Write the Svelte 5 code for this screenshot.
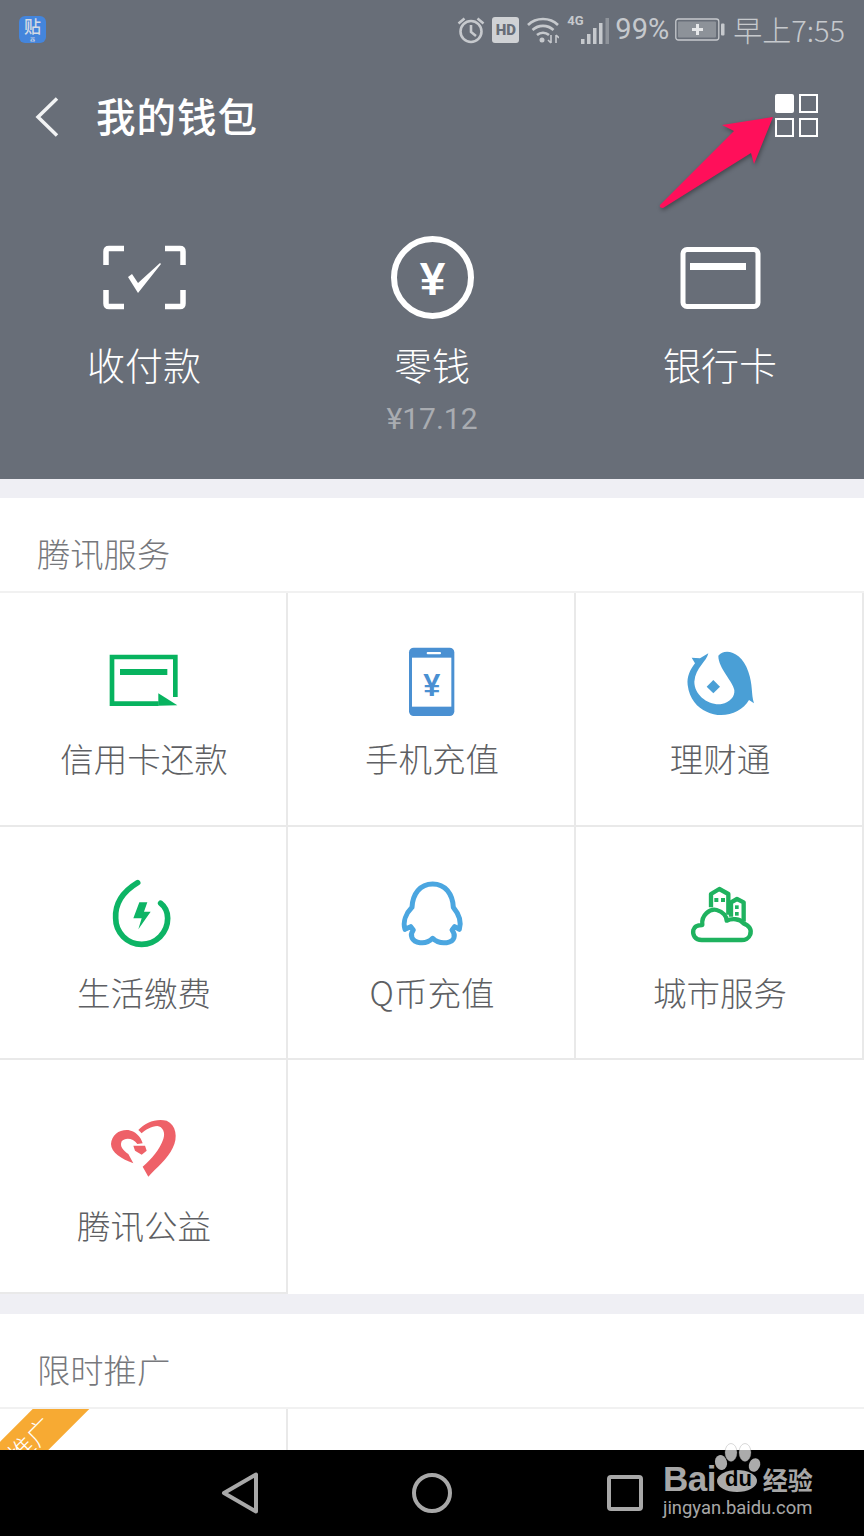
<script lang="ts">
	const actions = [
		{ icon: 'scan', label: '收付款', amount: '' },
		{ icon: 'coin', label: '零钱', amount: '¥17.12' },
		{ icon: 'card', label: '银行卡', amount: '' }
	];

	const services = [
		{ icon: 'credit', label: '信用卡还款' },
		{ icon: 'phone', label: '手机充值' },
		{ icon: 'licai', label: '理财通' },
		{ icon: 'bolt', label: '生活缴费' },
		{ icon: 'qq', label: 'Q币充值' },
		{ icon: 'city', label: '城市服务' },
		{ icon: 'heart', label: '腾讯公益' }
	];
</script>

{#snippet actionIcon(name: string)}
	{#if name === 'scan'}
		<svg class="action-icon" viewBox="0 0 83 83" width="83" height="83">
			<g fill="none" stroke="#fff" stroke-width="5.5">
				<path d="M21 12.5H6q-3 0-3 3V29" />
				<path d="M62 12.5h15q3 0 3 3V29" />
				<path d="M21 70.5H6q-3 0-3-3V54" />
				<path d="M62 70.5h15q3 0 3-3V54" />
			</g>
			<path d="M25 41l4-3 6 9 22-20 1 1-23 29z" fill="#fff" />
		</svg>
	{:else if name === 'coin'}
		<svg class="action-icon" viewBox="0 0 83 83" width="83" height="83">
			<circle cx="41.5" cy="41.5" r="38.5" fill="none" stroke="#fff" stroke-width="6" />
			<text x="41.5" y="59" text-anchor="middle" class="coin-yen">¥</text>
		</svg>
	{:else}
		<svg class="action-icon" viewBox="0 0 83 83" width="83" height="83">
			<rect x="4" y="13.5" width="75" height="57" rx="4" fill="none" stroke="#fff" stroke-width="5" />
			<rect x="11" y="27" width="56" height="7" fill="#fff" />
		</svg>
	{/if}
{/snippet}

{#snippet serviceIcon(name: string)}
	{#if name === 'credit'}
		<svg viewBox="27 9 270 270" width="90" height="90">
			<path d="M256 186V66H66v140h140" fill="none" stroke="#07b35f" stroke-width="14" />
			<rect x="90" y="102" width="142" height="18" fill="#07b35f" />
			<path d="M205 175l57 36-57 1z" fill="#07b35f" />
		</svg>
	{:else if name === 'phone'}
		<svg viewBox="6 9 270 270" width="90" height="90">
			<rect x="72" y="38" width="136" height="205" rx="14" fill="#4a90d2" />
			<rect x="81" y="68" width="118" height="147" fill="#fff" />
			<rect x="125" y="51" width="43" height="7" rx="3" fill="#fff" />
			<text x="140" y="184" text-anchor="middle" class="phone-yen">¥</text>
		</svg>
	{:else if name === 'licai'}
		<svg viewBox="0 9 270 270" width="90" height="90">
			<path
				d="M130 62C150 38 200 50 220 110c14 40 8 65 17 95l-15-10c-22 40-82 58-127 35-28-12-52-38-57-80-3-25 7-45 22-65L50 68l25 2 25-15c-5 25-38 42-42 85 0 40 42 72 82 67 25-5 40-22 38-42-3-25-48-65-48-103z"
				fill="#4a9fd6"
			/>
			<path d="M115 135l20 20-20 20-20-20z" fill="#4a9fd6" />
		</svg>
	{:else if name === 'bolt'}
		<svg viewBox="-3 6 270 270" width="90" height="90">
			<path
				d="M113 38C60 70 45 110 47 145a78 78 0 0 0 156 0c0-20-8-35-21-45"
				fill="none"
				stroke="#0db465"
				stroke-width="17"
				stroke-linecap="round"
			/>
			<path d="M118 97h24l-10 28h20l-37 53 10-33h-25z" fill="#0db465" />
		</svg>
	{:else if name === 'qq'}
		<svg viewBox="-9 6 270 270" width="90" height="90">
			<path
				d="M128 42c-38 0-60 30-62 70-18 18-28 43-21 66l17-8 8 10c-12 15-5 35 20 38 15 2 28-3 38-13 10 10 27 15 42 13 25-3 28-23 16-38l8-10 14 8c7-23-3-48-18-66-2-40-24-70-62-70z"
				fill="none"
				stroke="#4ba6e0"
				stroke-width="15"
				stroke-linejoin="round"
			/>
		</svg>
	{:else if name === 'city'}
		<svg viewBox="0 6 270 270" width="90" height="90">
			<g fill="none" stroke="#1fb25f" stroke-width="13" stroke-linejoin="round">
				<path d="M80 210c-20 0-28-15-25-30 3-12 15-15 27-15-4-30 23-50 43-45 20 5 30 20 30 32 15-7 40-7 50 8 17 5 27 20 20 35-3 10-15 15-25 15z" />
				<path d="M108 112V72l25-15 27 15v62" />
				<path d="M168 140V97l18-10 20 10v58" />
			</g>
			<g fill="#1fb25f">
				<rect x="118" y="84" width="12" height="12" />
				<rect x="138" y="84" width="12" height="12" />
				<rect x="180" y="106" width="11" height="11" />
				<rect x="180" y="126" width="11" height="11" />
			</g>
		</svg>
	{:else}
		<svg viewBox="-3 3 270 270" width="90" height="90">
			<g fill="#ee6168">
				<path d="M115 78c20-23 55-36 85-28 28 12 35 50 18 82-15 33-48 58-73 86l-17-30c27-23 52-53 62-83 7-20-2-37-18-39-17 0-37 12-47 22z" />
				<path d="M128 118c-6-22-23-36-43-40-27-2-50 14-52 42 0 25 32 45 67 58l-15-28c-15-10-27-22-20-38 10-12 35-10 47 8z" />
				<path d="M100 125h35l5 15-15 12-20-12z" />
			</g>
		</svg>
	{/if}
{/snippet}

<div class="page">
	<div class="main">
		<header class="wallet">
			<div class="statusbar">
				<div class="app-badge"><span class="app-badge-main">贴</span><span class="app-badge-sub">器</span></div>
				<div class="status-right">
					<svg viewBox="0 0 30 30" width="30" height="30">
						<g fill="none" stroke="#c6c9cd" stroke-width="2.6">
							<circle cx="15" cy="16.5" r="10.5" />
							<path d="M15 10v7l5 4" />
							<path d="M2.5 8.5l6-5M27.5 8.5l-6-5" />
						</g>
					</svg>
					<span class="hd">HD</span>
					<svg class="wifi" viewBox="0 0 32 28" width="32" height="28">
						<g fill="none" stroke="#c6c9cd" stroke-width="2.6">
							<path d="M1 9c8-8 22-8 30 0" />
							<path d="M5.5 14c6-5.5 15-5.5 21 0" />
							<path d="M10 19c3.500-3 8.500-3 12 0" />
						</g>
						<circle cx="15" cy="24" r="2.500" fill="#c6c9cd" />
						<path d="M24 19v8M29 19v8M21 24l3 3M32 22l-3-3" stroke="#c6c9cd" stroke-width="1.600" fill="none" />
					</svg>
					<div class="signal">
						<span class="net">4G</span>
						<svg viewBox="0 0 29 26" width="29" height="26">
							<g fill="#c6c9cd">
								<rect x="0" y="21" width="3.500" height="5" />
								<rect x="6" y="16" width="3.500" height="10" />
								<rect x="12" y="10" width="3.500" height="16" />
								<rect x="18" y="5" width="3.500" height="21" />
							</g>
							<rect x="24.500" y="0" width="3.500" height="26" fill="#8f949b" />
						</svg>
					</div>
					<span class="percent">99%</span>
					<svg class="battery" viewBox="0 0 50 24" width="50" height="24">
						<rect x="0.800" y="1" width="43" height="21" rx="2.500" fill="none" stroke="#c6c9cd" stroke-width="1.300" />
						<rect x="3" y="3.500" width="38" height="16" rx="1" fill="#8d9299" />
						<path d="M22.500 6v11M17 11.500h11" stroke="#e6e7e9" stroke-width="3" />
						<rect x="46" y="5.500" width="3.500" height="12" rx="1" fill="#c6c9cd" />
					</svg>
					<span class="clock">早上7:55</span>
				</div>
			</div>

			<div class="toolbar">
				<svg class="back" viewBox="0 0 24 40" width="24" height="40">
					<path d="M22 1.500L3 20l19 18.500" fill="none" stroke="#f2f3f4" stroke-width="3.500" />
				</svg>
				<h1>我的钱包</h1>
				<div class="apps">
					<span class="app-tile filled"></span>
					<span class="app-tile"></span>
					<span class="app-tile"></span>
					<span class="app-tile"></span>
				</div>
			</div>

			<div class="actions">
				{#each actions as action}
					<div class="action">
						{@render actionIcon(action.icon)}
						<span class="action-label">{action.label}</span>
						{#if action.amount}
							<span class="action-amount">{action.amount}</span>
						{/if}
					</div>
				{/each}
			</div>
		</header>

		<section class="group">
			<h2>腾讯服务</h2>
			<div class="grid">
				{#each services as service}
					<div class="cell">
						{@render serviceIcon(service.icon)}
						<span class="cell-label">{service.label}</span>
					</div>
				{/each}
			</div>
		</section>

		<section class="group">
			<h2>限时推广</h2>
			<div class="grid">
				<div class="cell promo">
					<span class="ribbon">推广</span>
				</div>
			</div>
		</section>
	</div>

	<nav class="navbar">
		<svg viewBox="0 0 38 44" width="38" height="44">
			<path d="M35 3.500v37L3 22z" fill="none" stroke="#a8a8a8" stroke-width="4" stroke-linejoin="round" />
		</svg>
		<svg viewBox="0 0 40 40" width="40" height="40">
			<circle cx="20" cy="20" r="18" fill="none" stroke="#a8a8a8" stroke-width="4" />
		</svg>
		<svg viewBox="0 0 38 38" width="38" height="38">
			<rect x="3" y="3" width="32" height="32" rx="2" fill="none" stroke="#a8a8a8" stroke-width="4" />
		</svg>
	</nav>

	<!-- annotation arrow drawn over the screenshot -->
	<svg class="arrow" viewBox="0 0 864 260" width="864" height="260">
		<path d="M773 117L722 125l12 6-74 74q-1 3 3 3l88-55 3 11z" fill="#ff0f5a" />
	</svg>

	<div class="watermark">
		<svg class="paw" viewBox="0 0 60 60" width="60" height="60">
			<g fill="rgba(255,255,255,0.67)">
				<ellipse cx="21" cy="9.500" rx="6" ry="9" stroke="rgba(130,130,130,0.3)" />
				<ellipse cx="35" cy="9.500" rx="6" ry="9" stroke="rgba(130,130,130,0.3)" />
				<ellipse cx="11" cy="19.500" rx="6" ry="7.500" transform="rotate(-15 11 19.500)" />
				<ellipse cx="44.500" cy="22" rx="5.500" ry="7" transform="rotate(25 44.500 22)" />
				<ellipse cx="27" cy="38" rx="20" ry="11" />
			</g>
		</svg>
		<div class="wm-top"><span class="wm-bai">Bai</span><span class="wm-du">du</span><span class="wm-cn">经验</span></div>
		<div class="wm-url">jingyan.baidu.com</div>
	</div>
</div>

<style>
	:global(body) {
		background: #000;
	}

	.page {
		position: relative;
		display: flex;
		flex-direction: column;
		width: 864px;
		height: 1536px;
		overflow: hidden;
		font-family: 'Noto Sans CJK SC', 'Noto Sans', sans-serif;
	}

	.main {
		flex: 1;
		min-height: 0;
		overflow: hidden;
		background: #efeff4;
	}

	.wallet {
		height: 479px;
		background: #686e78;
		color: #fff;
	}

	.statusbar {
		display: flex;
		align-items: center;
		justify-content: space-between;
		height: 60px;
		padding: 0 19px;
	}

	.app-badge {
		display: flex;
		flex-direction: column;
		align-items: center;
		width: 27px;
		height: 27px;
		margin-top: -2px;
		border-radius: 6px;
		background: #4485dc;
		color: #d5dbe4;
	}

	.app-badge-main {
		font-size: 17px;
		line-height: 20px;
		font-weight: 500;
	}

	.app-badge-sub {
		font-size: 5px;
		line-height: 6px;
	}

	.status-right {
		display: flex;
		align-items: center;
		color: #c6c9cd;
		font-family: Roboto, sans-serif;
	}

	.hd {
		width: 27px;
		height: 26px;
		margin-left: 6px;
		border-radius: 3px;
		background: #d0d2d5;
		color: #686e78;
		font-size: 15px;
		font-weight: 900;
		line-height: 26px;
		text-align: center;
	}

	.wifi {
		margin-left: 8px;
	}

	.signal {
		position: relative;
		display: flex;
		align-items: flex-end;
		height: 28px;
		margin-left: 8px;
		padding-left: 14px;
	}

	.net {
		position: absolute;
		left: 0;
		top: -2px;
		font-size: 13px;
		font-weight: 700;
		line-height: 14px;
	}

	.percent {
		margin-left: 5px;
		margin-top: -2px;
		font-size: 29px;
		line-height: 32px;
	}

	.battery {
		margin-left: 6px;
	}

	.clock {
		margin-left: 8px;
		margin-top: -2px;
		font-family: 'Noto Sans CJK SC', sans-serif;
		font-size: 29px;
		font-weight: 300;
		line-height: 32px;
	}

	.toolbar {
		display: flex;
		align-items: center;
		height: 114px;
		padding: 0 46px 0 35px;
	}

	.back {
		flex-shrink: 0;
	}

	h1 {
		flex: 1;
		margin: -4px 0 0 37px;
		font-size: 39.5px;
		font-weight: 500;
		letter-spacing: 1px;
		line-height: 50px;
	}

	.apps {
		display: grid;
		grid-template-columns: 19px 19px;
		grid-auto-rows: 19px;
		gap: 5px;
		margin-top: -4px;
	}

	.app-tile {
		border: 2.5px solid #fff;
		box-sizing: border-box;
	}

	.app-tile.filled {
		background: #fff;
		border-radius: 2px;
	}

	.actions {
		display: grid;
		grid-template-columns: repeat(3, 288px);
		padding-top: 62px;
	}

	.action {
		display: flex;
		flex-direction: column;
		align-items: center;
	}

	.action-icon {
		display: block;
	}

	.coin-yen {
		fill: #fff;
		font-family: 'Liberation Sans', sans-serif;
		font-size: 46px;
		font-weight: 700;
	}

	.action-label {
		margin-top: 17px;
		font-size: 38px;
		font-weight: 300;
		line-height: 56px;
	}

	.action-amount {
		margin-top: 7px;
		color: #a9acb1;
		font-family: Roboto, sans-serif;
		font-size: 30px;
		line-height: 40px;
	}

	.group {
		margin-top: 19px;
		background: #fff;
	}

	.group + .group {
		margin-top: 20.5px;
	}

	h2 {
		margin: 0;
		padding: 8px 0 0 37px;
		color: #77787c;
		font-size: 33.3px;
		font-weight: 300;
		line-height: 94px;
		height: 95px;
		border-bottom: 2px solid #f1f1f1;
		box-sizing: border-box;
	}

	.grid {
		display: grid;
		grid-template-columns: repeat(3, 288px);
		grid-auto-rows: 233.500px;
	}

	.cell {
		display: flex;
		flex-direction: column;
		align-items: center;
		box-sizing: border-box;
		padding: 45px 0 0 2px;
		border-right: 2px solid #e9e9e9;
		border-bottom: 2px solid #e9e9e9;
	}

	.cell svg {
		display: block;
		flex-shrink: 0;
	}

	.phone-yen {
		fill: #4a90d2;
		font-family: 'Liberation Sans', sans-serif;
		font-size: 92px;
		font-weight: 700;
	}

	.cell-label {
		margin-top: 7px;
		color: #5e5f63;
		font-size: 33.5px;
		font-weight: 300;
		line-height: 46px;
	}

	.promo {
		position: relative;
		overflow: hidden;
	}

	.ribbon {
		position: absolute;
		top: 11px;
		left: -70px;
		width: 200px;
		height: 40px;
		background: #f7aa33;
		color: #fff;
		font-size: 26px;
		font-weight: 300;
		line-height: 40px;
		text-align: center;
		transform: rotate(-45deg);
	}

	.navbar {
		display: flex;
		align-items: center;
		flex-shrink: 0;
		height: 86px;
		background: #000;
	}

	.navbar svg:nth-child(1) {
		margin-left: 221px;
	}

	.navbar svg:nth-child(2) {
		margin-left: 153px;
	}

	.navbar svg:nth-child(3) {
		margin-left: 154px;
	}

	.arrow {
		position: absolute;
		top: 0;
		left: 0;
		filter: drop-shadow(1px 2px 2px rgba(0, 0, 0, 0.35));
		pointer-events: none;
	}

	.watermark {
		position: absolute;
		left: 663px;
		top: 1463px;
		width: 170px;
		color: rgba(255, 255, 255, 0.67);
	}

	.paw {
		position: absolute;
		left: 47px;
		top: -20px;
	}

	.wm-top {
		position: relative;
		display: flex;
		align-items: center;
		height: 32px;
	}

	.wm-bai {
		font-family: 'Liberation Sans', sans-serif;
		font-size: 35px;
		font-weight: 700;
		line-height: 32px;
		letter-spacing: -0.500px;
	}

	.wm-du {
		margin-left: 9px;
		color: #000;
		font-family: 'Liberation Sans', sans-serif;
		font-size: 22px;
		font-weight: 700;
		line-height: 32px;
	}

	.wm-cn {
		margin-left: 11px;
		font-size: 25px;
		font-weight: 700;
		line-height: 32px;
	}

	.wm-url {
		font-family: Roboto, sans-serif;
		font-size: 18.4px;
		line-height: 26px;
		white-space: nowrap;
	}
</style>
